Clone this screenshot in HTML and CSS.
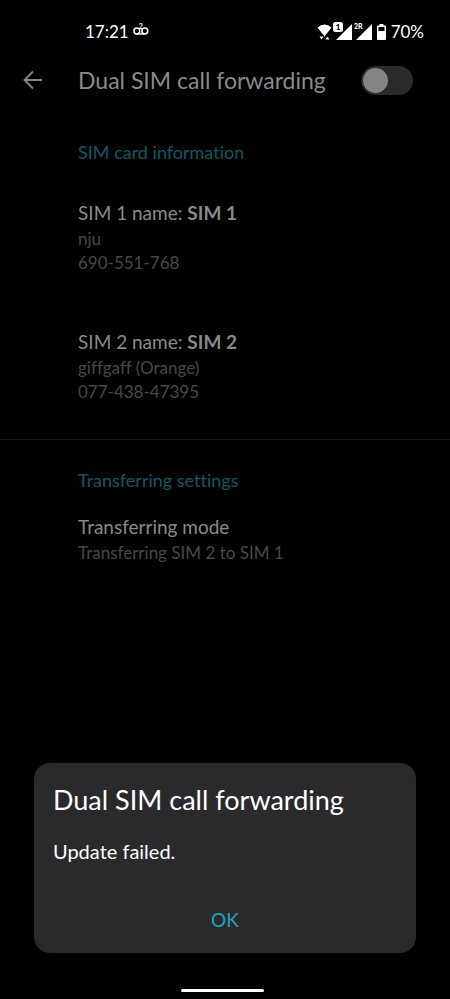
FILE: index.html
```
<!DOCTYPE html>
<html lang="en">
<head>
  <meta charset="UTF-8">
  <meta name="viewport" content="width=device-width, initial-scale=1.0">
  <title>Dual SIM call forwarding</title>
  <link rel="stylesheet" href="styles.css">
</head>
<body>
  <div class="status-bar">
    <span>17:21</span>
    <svg class="voicemail" width="16" height="18" viewBox="0 0 16 18">
      <g fill="none" stroke="#fff" stroke-width="1.5">
        <circle cx="3.8" cy="11" r="2.9"/>
        <circle cx="11.800" cy="11" r="2.9"/>
        <path d="M3.8 13.900h8"/>
      </g>
      <text x="7.800" y="9" font-size="7" font-weight="bold" text-anchor="middle" fill="#fff">2</text>
    </svg>
    <div class="status-icons">
      <svg width="15" height="20" viewBox="0 0 15 20">
        <path d="M.5 5.500Q7.500-.5 14.500 5.500L9.500 12Q7.500 10.500 5.500 12z" fill="#fff"/>
        <path d="M5.500 11h4l-2 4z" fill="#fff"/>
        <path d="M2.500 14.500h4l-2 3zM8.500 17.500l2-3 2 3z" fill="#fff"/>
      </svg>
      <svg width="20" height="20" viewBox="0 0 20 20">
        <path d="M19 2v16H3z" fill="#fff"/>
        <rect x="0" y="0" width="11" height="11" rx="3" fill="#000"/>
        <rect x="0" y="0" width="10" height="10" rx="2.500" fill="#fff"/>
        <text x="5" y="8" font-size="8" font-weight="900" text-anchor="middle">1</text>
      </svg>
      <svg width="19" height="20" viewBox="0 0 19 20">
        <path d="M18 2v16H2z" fill="#fff"/>
        <path d="M0 0h10v8H0z" fill="#000"/>
        <text x="0" y="7" font-size="7" font-weight="900" fill="#fff">2R</text>
      </svg>
      <svg class="battery" width="9" height="20" viewBox="0 0 9 20">
        <path d="M2.500 2h4v1.500H8q1 0 1 1V17q0 1-1 1H1q-1 0-1-1V4.500q0-1 1-1h1.500z" fill="#fff"/>
        <path d="M1.500 5h6v4h-6z" fill="#000"/>
      </svg>
      <span>70%</span>
    </div>
  </div>

  <header class="toolbar">
    <button class="back" aria-label="Back">
      <svg width="20" height="20" viewBox="0 0 20 20" fill="none" stroke="#858585" stroke-width="2">
        <path d="M19 10H2M10 1.500L1.500 10L10 18.500"/>
      </svg>
    </button>
    <label class="title" for="forwarding">Dual SIM call forwarding</label>
    <input class="switch" type="checkbox" role="switch" id="forwarding">
  </header>

  <main>
    <section class="sim-info">
      <h2>SIM card information</h2>
      <div class="item">
        <h3>SIM 1 name: <b>SIM 1</b></h3>
        <p>nju<br>690-551-768</p>
      </div>
      <div class="item">
        <h3>SIM 2 name: <b>SIM 2</b></h3>
        <p>giffgaff (Orange)<br>077-438-47395</p>
      </div>
    </section>
    <section class="transfer">
      <h2>Transferring settings</h2>
      <div class="item">
        <h3>Transferring mode</h3>
        <p>Transferring SIM 2 to SIM 1</p>
      </div>
    </section>
  </main>

  <div class="dialog" role="alertdialog" aria-labelledby="dialogTitle" aria-describedby="dialogText">
    <h1 id="dialogTitle">Dual SIM call forwarding</h1>
    <p id="dialogText">Update failed.</p>
    <button class="ok">OK</button>
  </div>
  <div class="home-bar"></div>
</body>
</html>
```
FILE: styles.css
```
* { box-sizing: border-box; }
body { margin: 0; min-height: 100vh; background: #000; color: #8a8a8a; font-family: Lato, "Noto Sans", sans-serif; font-size: 17px; line-height: 24px; font-variant-ligatures: none; }
h1, h2, h3, p { margin: 0; font-weight: normal; }
button { background: none; border: 0; padding: 0; font: inherit; cursor: pointer; }
svg { display: block; flex: none; }

.status-bar { display: flex; align-items: center; padding: 21px 26px 0 85px; height: 42px; color: #fff; }
.voicemail { margin-left: 4px; margin-bottom: 5px; }
.status-icons { display: flex; align-items: center; margin-left: auto; }
.status-icons svg { margin-right: 1px; }
.status-icons .battery { margin-left: 3px; margin-right: 5px; }

.toolbar { display: flex; align-items: center; height: 76px; padding: 0 37px 0 23px; }
.back { width: 55px; }
.title { flex: 1; font-size: 23px; white-space: nowrap; }
.switch { appearance: none; margin: 0; width: 52px; height: 29px; padding: 2px; border-radius: 15px; background: #2b2b2b; }
.switch::before { content: ""; display: block; width: 25px; height: 25px; border-radius: 50%; background: #858585; }
.switch:checked::before { margin-left: auto; }

h2 { color: #0e5a64; font-size: 18px; }
h3 { font-size: 19px; line-height: 28px; }
main p { color: #484848; }
.sim-info, .transfer { padding-left: 78px; }
.sim-info { padding-top: 22px; padding-bottom: 35px; border-bottom: 1px solid #161616; }
.sim-info .item { margin-top: 35px; }
.sim-info .item + .item { margin-top: 53px; }
.transfer { padding-top: 28px; }
.transfer .item { margin-top: 21px; }

.dialog { position: fixed; left: 34px; right: 34px; bottom: 46px; padding: 20px 19px 17px; border-radius: 16px; background: #2a2a2c; color: #fff; }
.dialog h1 { font-size: 27px; line-height: 34px; }
.dialog p { margin-top: 22px; font-size: 20px; }
.ok { display: block; width: 100%; margin-top: 41px; height: 32px; color: #1fa3b5; font-size: 19px; }
.home-bar { position: fixed; left: 50%; bottom: 7px; width: 83px; height: 3px; margin-left: -44px; border-radius: 2px; background: #fff; }
```
